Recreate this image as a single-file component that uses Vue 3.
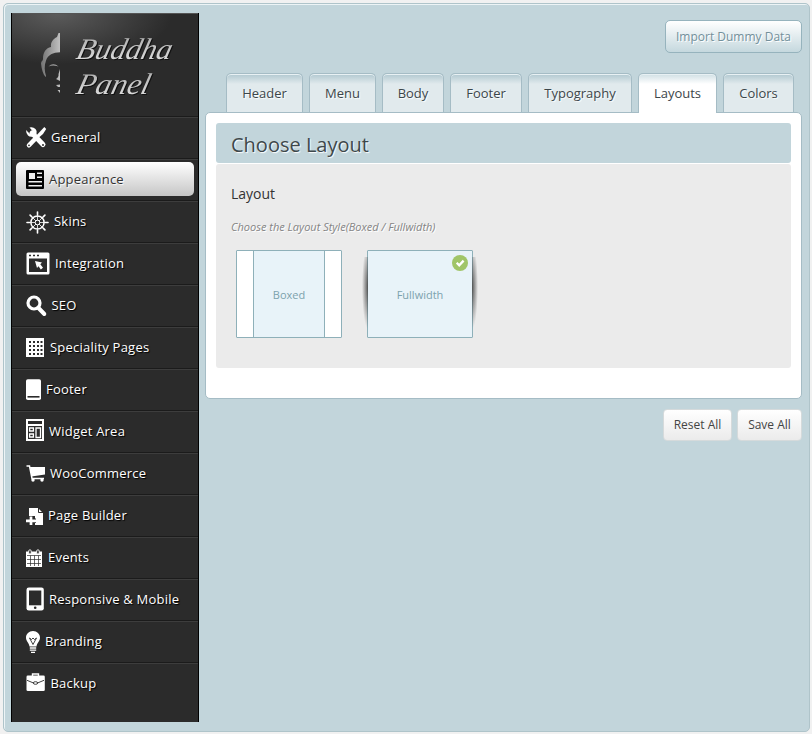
<script setup>
const menu = [
  { label: 'General', icon: 'tools', w: 25 },
  { label: 'Appearance', icon: 'news', w: 23, active: true },
  { label: 'Skins', icon: 'wheel', w: 28 },
  { label: 'Integration', icon: 'window', w: 29 },
  { label: 'SEO', icon: 'search', w: 25.5 },
  { label: 'Speciality Pages', icon: 'grid', w: 24 },
  { label: 'Footer', icon: 'footer', w: 20 },
  { label: 'Widget Area', icon: 'widget', w: 23 },
  { label: 'WooCommerce', icon: 'cart', w: 24 },
  { label: 'Page Builder', icon: 'page', w: 22 },
  { label: 'Events', icon: 'calendar', w: 22 },
  { label: 'Responsive & Mobile', icon: 'tablet', w: 23 },
  { label: 'Branding', icon: 'bulb', w: 19 },
  { label: 'Backup', icon: 'case', w: 24.5 },
]
const tabs = [
  { label: 'Header', w: 77 },
  { label: 'Menu', w: 67 },
  { label: 'Body', w: 62 },
  { label: 'Footer', w: 72 },
  { label: 'Typography', w: 104 },
  { label: 'Layouts', w: 79, active: true },
  { label: 'Colors', w: 71 },
]
const spokes = [0, 45, 90, 135, 180, 225, 270, 315]
</script>

<template>
  <div class="panel">
    <aside class="sidebar">
      <div class="logo">
        <svg width="186" height="102" viewBox="12 14 186 102">
          <defs>
            <linearGradient id="metal" gradientUnits="userSpaceOnUse" x1="41" y1="0" x2="60" y2="0">
              <stop offset="0" stop-color="#737373" />
              <stop offset="1" stop-color="#c0c0c0" />
            </linearGradient>
            <linearGradient id="ink" x1="0" y1="0" x2="0" y2="1">
              <stop offset="0" stop-color="#a8a8a8" />
              <stop offset="1" stop-color="#e6e6e6" />
            </linearGradient>
          </defs>
          <g fill="url(#metal)">
            <path d="M60 33H58.500L57 37C53 39 50.500 42 51 47C46 48 43 52 43 59C43 61 41 61 41 63.500C41.500 69 43 74 45.500 77L46 76C44.500 71 44 66 46 60.500C48 55 53 52.300 60 52.300Z" />
            <path d="M48.500 66.500Q53 62 58.500 66.500Q53 64.300 48.500 66.500Z" />
            <path d="M60 69V81L56 79Q59 77 58.500 74Z" />
            <path d="M56 85L60 84.500V87H58ZM57.500 90H60V93Z" />
          </g>
          <g class="script" fill="url(#ink)">
            <text transform="translate(75 59) skewX(-14)" textLength="95" lengthAdjust="spacingAndGlyphs">Buddha</text>
            <text transform="translate(75 94) skewX(-14)" textLength="73" lengthAdjust="spacingAndGlyphs">Panel</text>
          </g>
        </svg>
      </div>
      <ul class="menu">
        <li v-for="m in menu" :key="m.label">
          <a :class="{ active: m.active }">
            <svg class="icon" :width="m.w" height="34" :viewBox="`0 3 ${m.w} 34`">
              <g v-if="m.icon === 'tools'">
                <path d="M6 16L17 27.500" stroke="currentColor" stroke-width="5" stroke-linecap="round" />
                <path d="M0 13L4 17L7 14.500L3.500 10.500Q7 9.500 9.500 12Q11.500 14 10.500 17L7.500 19.500Q4 20.500 2 18.500Q0 16.500 0 13Z" fill="currentColor" />
                <path d="M18.300 10L20.200 12L17 17L10 23L8 21L15 13.500Z" fill="currentColor" />
                <path d="M9 22L3 28.300" stroke="currentColor" stroke-width="4.500" stroke-linecap="round" />
                <circle cx="17" cy="28" r="1" fill="#2b2b2b" /><circle cx="3" cy="28.300" r=".9" fill="#2b2b2b" />
              </g>
              <g v-else-if="m.icon === 'news'">
                <rect y="11" width="18" height="19" rx="1" fill="currentColor" />
                <path d="M3 14H9V20H3ZM11 13.500H16V15H11ZM11 17.500H16V19H11ZM2.500 22H16V23.500H2.500ZM2.500 26H16V27.500H2.500Z" fill="#eee" />
              </g>
              <g v-else-if="m.icon === 'wheel'" fill="none" stroke="currentColor">
                <circle cx="11.500" cy="21.500" r="6.600" stroke-width="1.500" />
                <circle cx="11.500" cy="21.500" r="2.300" stroke-width="1" />
                <path v-for="s in spokes" :key="s" d="M11.500 19.300V12.500" :transform="`rotate(${s} 11.500 21.500)`" stroke-width=".8" />
                <path v-for="s in spokes" :key="'h' + s" d="M11.500 13.500V11" :transform="`rotate(${s} 11.500 21.500)`" stroke-width="1.600" stroke-linecap="round" />
              </g>
              <g v-else-if="m.icon === 'window'">
                <rect x=".5" y="9.500" width="23" height="22" rx="1.500" fill="currentColor" />
                <path d="M3 15.500H21V29H3Z" fill="#2b2b2b" />
                <path d="M3 12.500H5M7 12.500H9M11 12.500H13" stroke="#2b2b2b" stroke-width="1.600" />
                <path d="M9 18L16 19.500L14.300 21.200L17 24.700L14.800 26.500L12.500 23.300L11 25Z" fill="currentColor" />
              </g>
              <g v-else-if="m.icon === 'search'" fill="none" stroke="currentColor">
                <circle cx="8" cy="18" r="6" stroke-width="3.200" />
                <path d="M12.500 23L18.300 29" stroke-width="4" stroke-linecap="round" />
              </g>
              <g v-else-if="m.icon === 'grid'">
                <path d="M0 11H18V30H0Z" fill="currentColor" />
                <path d="M4 14V28.500M8 14V28.500M12 14V28.500M15.500 14V28.500" stroke="#2b2b2b" stroke-width="2" stroke-dasharray="2 2" />
              </g>
              <g v-else-if="m.icon === 'footer'">
                <rect y="10.200" width="15" height="20.800" rx="1.800" fill="currentColor" />
                <path d="M1.500 27H13.500V28.600H1.500Z" fill="#2b2b2b" />
              </g>
              <g v-else-if="m.icon === 'widget'" fill="none" stroke="currentColor">
                <path d="M1 9H17V29H1Z" stroke-width="2" />
                <path d="M2 11.500H16" stroke="#2b2b2b" stroke-width="2.400" />
                <path d="M1 14H17" stroke-width="2" />
                <path d="M3.600 17H7.400V20H3.600ZM3.600 23H7.400V26H3.600ZM10 17H14.500V26.500H10Z" stroke-width="1.300" />
              </g>
              <g v-else-if="m.icon === 'cart'">
                <path d="M.5 13H3.500L6 25.500H18" fill="none" stroke="currentColor" stroke-width="1.500" />
                <path d="M4 14H19V21.500L5.500 23.500Z" fill="currentColor" />
                <circle cx="7" cy="27" r="1.700" fill="currentColor" /><circle cx="16" cy="27" r="1.700" fill="currentColor" />
              </g>
              <g v-else-if="m.icon === 'page'">
                <path d="M3 13H12L17 18V30H9V21H3Z" fill="currentColor" />
                <path d="M12.500 13V17.500H17" fill="none" stroke="#2b2b2b" stroke-width="1" />
                <path d="M5 21V30.500M0 25.800H10" stroke="#2b2b2b" stroke-width="4.500" />
                <path d="M5 21.500V30M0 25.800H10" stroke="currentColor" stroke-width="2.700" />
              </g>
              <g v-else-if="m.icon === 'calendar'">
                <path d="M0 14.500H16V30H0Z" fill="currentColor" />
                <path d="M1 18.500H15M1 22.500H15M1 26.500H15M4.500 18.500V29M8.500 18.500V29M12.500 18.500V29" stroke="#2b2b2b" stroke-width=".7" />
                <rect x="2.700" y="12.900" width="2.500" height="4" rx="1" fill="#2b2b2b" stroke="currentColor" stroke-width=".9" />
                <rect x="10.700" y="12.900" width="2.500" height="4" rx="1" fill="#2b2b2b" stroke="currentColor" stroke-width=".9" />
              </g>
              <g v-else-if="m.icon === 'tablet'">
                <rect x=".5" y="8.500" width="17.300" height="23" rx="2.300" fill="currentColor" />
                <path d="M3 11.500H15.300V26.300H3Z" fill="#2b2b2b" /><circle cx="9.200" cy="28.800" r="1.300" fill="#2b2b2b" />
              </g>
              <g v-else-if="m.icon === 'bulb'">
                <path d="M7 10C11 10 14 13 14 16.700C14 20 11 21.500 10.500 25.500H3.500C3 21.500 0 20 0 16.700C0 13 3 10 7 10Z" fill="currentColor" />
                <path d="M3.500 17L7 23.500L10.500 17L8.500 18.500L7 17L5.500 18.500Z" fill="none" stroke="#2b2b2b" stroke-width=".9" />
                <path d="M3.800 27H10.200M3.800 29.200H10.200M5 31.300H9" stroke="currentColor" stroke-width="1.300" />
              </g>
              <g v-else>
                <path d="M6.500 13V11H12.500V13" fill="none" stroke="currentColor" stroke-width="1.400" />
                <rect x=".5" y="12.600" width="18.300" height="15.400" rx="1.300" fill="currentColor" />
                <path d="M1 17.300L7.500 20M18 17.300L11.500 20" stroke="#2b2b2b" stroke-width=".9" />
                <ellipse cx="9.500" cy="20" rx="2.200" ry="1.300" fill="none" stroke="#2b2b2b" stroke-width=".9" />
              </g>
            </svg>
            <span>{{ m.label }}</span>
          </a>
        </li>
      </ul>
    </aside>

    <main class="main">
      <div class="top"><button class="import">Import Dummy Data</button></div>
      <nav class="tabs">
        <a v-for="t in tabs" :key="t.label" class="tab" :class="{ on: t.active }" :style="{ width: t.w + 'px' }">{{ t.label }}</a>
      </nav>
      <section class="card">
        <h2>Choose Layout</h2>
        <div class="body">
          <h3>Layout</h3>
          <p>Choose the Layout Style(Boxed / Fullwidth)</p>
          <div class="options">
            <div class="option boxed"><span>Boxed</span></div>
            <div class="option full">
              <span>Fullwidth</span>
              <svg class="check" width="16" height="16" viewBox="0 0 16 16">
                <circle cx="8" cy="8" r="8" fill="#a0c568" />
                <path d="M4.700 7.800L7.200 10.300L11.600 5.600" fill="none" stroke="#fff" stroke-width="2.300" />
              </svg>
            </div>
          </div>
        </div>
      </section>
      <div class="actions"><button>Reset All</button><button>Save All</button></div>
    </main>
  </div>
</template>

<style>
body { background: #f1f1f1; }
</style>

<style scoped>
* { box-sizing: border-box; }
.panel {
  display: flex;
  width: 807px;
  height: 729px;
  margin: 3px 0 0 3px;
  padding: 9px 7px;
  border: 1px solid #afc4ca;
  border-radius: 5px;
  background: #c2d5db;
  box-shadow: inset 1px 1px 0 #edf4f6;
  font-family: "Open Sans", sans-serif;
}
.sidebar {
  width: 188px;
  height: 709px;
  background: #2b2b2b;
  border: solid #000;
  border-width: 0 1px;
}
.logo {
  height: 104px;
  border-top: 1px solid #555;
  border-bottom: 1px solid #1b1b1b;
  background: radial-gradient(ellipse 115px 50px at 45px 0, #5b5b5b, #2b2b2b);
}
.logo svg { display: block; }
.script {
  font: italic 30px "Liberation Serif", serif;
  filter: drop-shadow(1px 1px 0 #111);
}
.menu { margin: 0; padding: 0; list-style: none; }
.menu li {
  height: 42px;
  padding: 2px 4px 0;
  border-top: 1px solid #3d3d3d;
  border-bottom: 1px solid #1b1b1b;
}
.menu li:last-child { border-bottom: 0; }
.menu a {
  display: flex;
  height: 34px;
  padding-left: 10px;
  border-radius: 5px;
  color: #fff;
  font-size: 13px;
  letter-spacing: 0.22px;
  line-height: 34px;
  text-shadow: 1px 1px 1px #000;
  white-space: nowrap;
}
.menu a.active {
  background: linear-gradient(#fff, #c6c6c6);
  color: #333;
  text-shadow: 1px 1px 1px #fff;
}
.icon { flex: none; overflow: visible; }
.active .icon { color: #000; }
.main { width: 597px; margin-left: 6px; }
.top { display: flex; justify-content: flex-end; height: 60px; padding-top: 7px; }
button {
  height: 32px;
  padding: 0 0 1px;
  font: 12px "Open Sans", sans-serif;
  white-space: nowrap;
}
.import {
  width: 137px;
  height: 33px;
  border: 1px solid #96b3bd;
  border-radius: 5px;
  background: linear-gradient(#fff, #c5d8de);
  color: #73909b;
  text-shadow: 1px 1px 0 #fff;
}
.tabs { display: flex; gap: 6px; height: 39px; padding-left: 21px; }
.tab {
  height: 39px;
  border: 1px solid #a5bcc5;
  border-bottom: 0;
  border-radius: 5px 5px 0 0;
  background: linear-gradient(#b1c8d0, #e1eaed 10px);
  box-shadow: inset 0 1px 0 #e8f1f4;
  color: #3c464a;
  font-size: 13px;
  line-height: 39px;
  text-align: center;
  text-shadow: 1px 1px 1px #fff;
}
.tab.on {
  position: relative;
  height: 40px;
  background: linear-gradient(#cfdfe4, #fff 10px);
}
.card {
  height: 287px;
  padding: 10px;
  border: 1px solid #a5bcc5;
  border-radius: 5px;
  background: #fff;
}
h2 {
  height: 40px;
  margin: 0 0 1px;
  padding-left: 15px;
  border-radius: 3px;
  background: #c2d5db;
  color: #3e484b;
  font-size: 20px;
  font-weight: 400;
  line-height: 43px;
  text-shadow: 1px 1px 1px #fff;
}
.body { height: 204px; padding: 20px 15px; border-radius: 3px; background: #ebebeb; }
h3 { margin: 0; color: #333; font-size: 14px; font-weight: 400; line-height: 20px; }
p {
  margin: 14px 0 0;
  color: #858585;
  font-size: 11px;
  font-style: italic;
  line-height: 18px;
  text-shadow: 1px 1px 0 #fff;
}
.options { display: flex; gap: 25px; padding: 14px 5px 0; }
.option {
  position: relative;
  display: flex;
  align-items: center;
  justify-content: center;
  width: 106px;
  height: 88px;
  border: 1px solid #8eb0b9;
  border-radius: 1px;
  background: #e8f3f9;
  color: #7ca2ad;
  font-size: 11px;
  font-weight: 500;
}
.boxed { padding: 0 16px; background: #fff; }
.boxed span {
  display: flex;
  align-items: center;
  justify-content: center;
  width: 72px;
  height: 86px;
  border: solid #8eb0b9;
  border-width: 0 1px;
  background: #e8f3f9;
}
.full::before, .full::after {
  content: "";
  position: absolute;
  top: 6px;
  width: 6px;
  height: 72px;
}
.full::before {
  left: -6px;
  background: radial-gradient(ellipse 6px 42px at 100% 42%, #555, transparent);
}
.full::after {
  right: -6px;
  background: radial-gradient(ellipse 6px 42px at 0 42%, #555, transparent);
}
.check { position: absolute; top: 4px; right: 4px; }
.actions { display: flex; justify-content: flex-end; gap: 5px; padding-top: 10px; }
.actions button {
  width: 69px;
  border: 1px solid #d5dadb;
  border-radius: 4px;
  background: linear-gradient(#fff, #ebebeb);
  color: #444;
}
.actions button:last-child { width: 65px; }
</style>
